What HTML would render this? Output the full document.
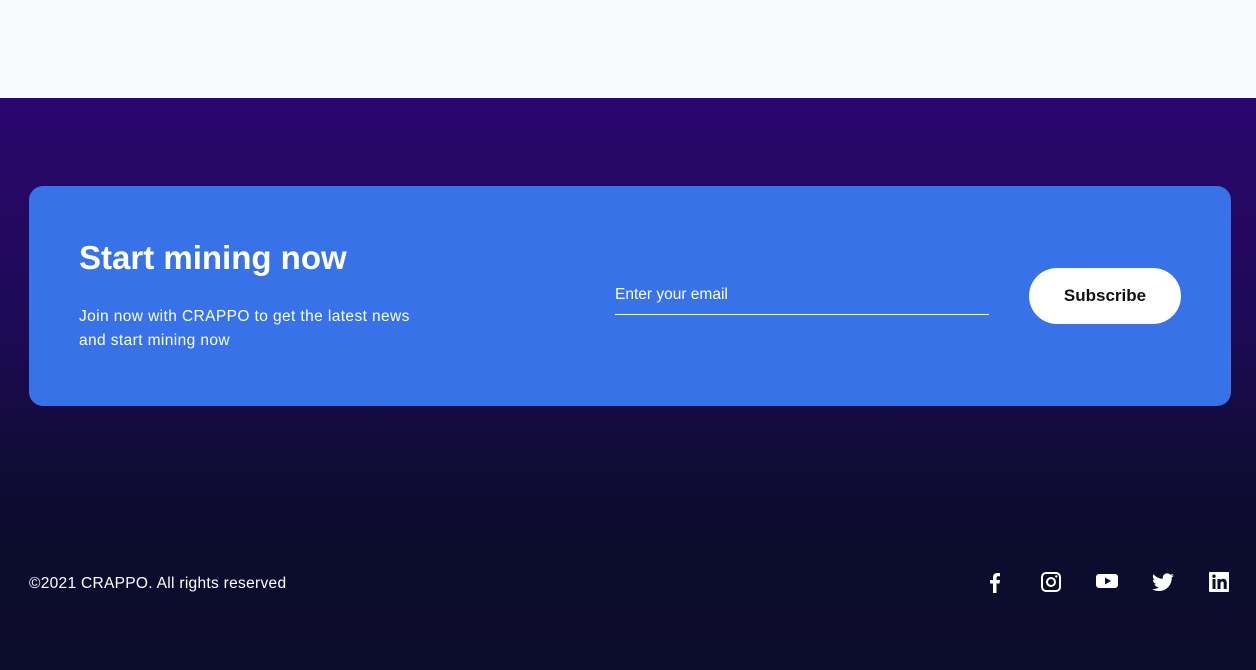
<!DOCTYPE html>
<html><head><meta charset="utf-8"><style>
*{margin:0;padding:0;box-sizing:border-box}
body{width:1256px;height:670px;overflow:hidden;font-family:"Liberation Sans",sans-serif;background:#f8f9fb;position:relative}
.dark{position:absolute;top:98px;left:0;width:1256px;height:572px;background:linear-gradient(180deg,#2b066e 0%,#1d0a55 40%,#0d0c30 70%,#0b0b2c 100%)}
.card{position:absolute;left:29px;top:186px;width:1202px;height:220px;background:#3772e8;border-radius:14px;color:#fff}
h2{position:absolute;left:50px;top:53px;font-size:33px;font-weight:bold;letter-spacing:0px}
.p{position:absolute;left:50px;top:119px;font-size:15.5px;line-height:24px;width:345px;letter-spacing:0.4px}
.email{position:absolute;left:586px;top:100px;width:374px;font-size:15.5px;padding-bottom:10px;border-bottom:1px solid #fff}
.btn{position:absolute;left:1000px;top:82px;width:152px;height:56px;border-radius:28px;background:#fff;color:#111;font-weight:bold;font-size:17px;text-align:center;line-height:56px}
.copy{position:absolute;left:29px;top:575px;color:#fff;font-size:15.5px;letter-spacing:0.3px}
.icons svg{position:absolute;top:571px;fill:#fff}
</style></head><body>
<div class="dark"></div>
<div class="card">
<h2>Start mining now</h2>
<div class="p">Join now with CRAPPO to get the latest news<br>and start mining now</div>
<div class="email">Enter your email</div>
<div class="btn">Subscribe</div>
</div>
<div class="copy">©2021 CRAPPO. All rights reserved</div>
<div class="icons">
<svg style="left:985px" width="20" height="22" viewBox="0 0 20 22"><path d="M11.5 22V12.5h3l.5-3.5h-3.5V7c0-1 .3-1.7 1.8-1.7H15V2.2C14.6 2.1 13.5 2 12.3 2 9.7 2 8 3.5 8 6.4V9H5v3.5h3V22z"/></svg>
<svg style="left:1040px" width="22" height="22" viewBox="0 0 22 22"><path fill-rule="evenodd" d="M6 1h10a5 5 0 0 1 5 5v10a5 5 0 0 1-5 5H6a5 5 0 0 1-5-5V6a5 5 0 0 1 5-5zm0 2a3 3 0 0 0-3 3v10a3 3 0 0 0 3 3h10a3 3 0 0 0 3-3V6a3 3 0 0 0-3-3zm5 3a5 5 0 1 1 0 10 5 5 0 0 1 0-10zm0 2a3 3 0 1 0 0 6 3 3 0 0 0 0-6zm5.3-3.8a1.2 1.2 0 1 1 0 2.4 1.2 1.2 0 0 1 0-2.4z"/></svg>
<svg style="left:1095px" width="24" height="22" viewBox="0 0 24 22"><path fill-rule="evenodd" d="M4 3h16a3 3 0 0 1 3 3v8a3 3 0 0 1-3 3H4a3 3 0 0 1-3-3V6a3 3 0 0 1 3-3zm6 3.5v7l6-3.5z"/></svg>
<svg style="left:1151px" width="24" height="22" viewBox="0 0 24 22"><path d="M23 4.5c-.8.4-1.7.6-2.6.7.9-.6 1.6-1.4 2-2.5-.9.5-1.9.9-2.9 1.1A4.5 4.5 0 0 0 11.8 7.9 12.8 12.8 0 0 1 2.5 3.2a4.5 4.5 0 0 0 1.4 6c-.7 0-1.4-.2-2-.6 0 2.2 1.5 4 3.6 4.4-.7.2-1.4.2-2 .1.6 1.8 2.2 3.1 4.2 3.1A9 9 0 0 1 1 18c2 1.3 4.4 2 6.9 2 8.3 0 12.8-6.9 12.8-12.8v-.6c.9-.6 1.7-1.4 2.3-2.1z"/></svg>
<svg style="left:1208px" width="22" height="22" viewBox="0 0 22 22"><path fill-rule="evenodd" d="M2 1h18a1 1 0 0 1 1 1v18a1 1 0 0 1-1 1H2a1 1 0 0 1-1-1V2a1 1 0 0 1 1-1zm2.5 7v10h3V8zm1.5-4.5a1.7 1.7 0 1 0 0 3.4 1.7 1.7 0 0 0 0-3.4zM9.5 8v10h3v-5.3c0-1.4.6-2.2 1.7-2.2s1.5.8 1.5 2.2V18h3v-6c0-2.8-1.4-4.2-3.5-4.2-1.3 0-2.2.6-2.7 1.4V8z"/></svg>
</div>
</body></html>
